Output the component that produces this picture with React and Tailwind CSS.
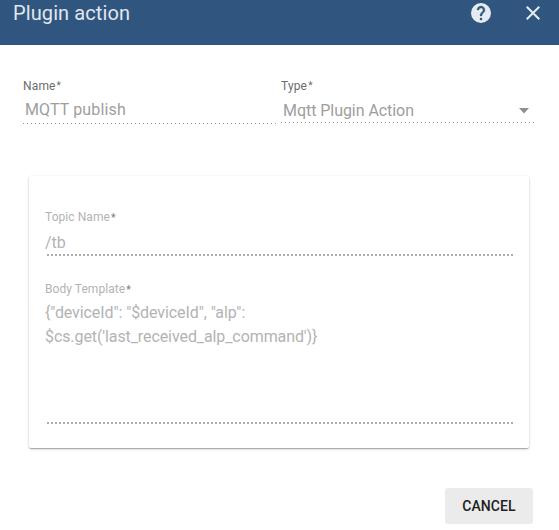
import React from 'react';

function Header() {
  return (
    <header className="flex h-[45px] items-start bg-[#305680] pl-[13px] pr-[14px] text-[#e0e7ee]">
      <h2 className="flex-1 text-[20px] leading-[26px] tracking-[0.1px]">Plugin action</h2>
      <button aria-label="Help" className="mr-[28px] mt-px block h-6 w-6">
        <svg viewBox="0 0 24 24" className="block h-6 w-6">
          <circle cx="12" cy="12" r="10" className="fill-[#e6ebf0]" />
          <path
            className="fill-[#305680] stroke-[#305680] [stroke-width:0.3]"
            d="M11 17h2v2h-2zM15.07 11.25l-.9.92C13.45 12.9 13 13.5 13 15h-2v-.5c0-1.1.45-2.1 1.17-2.83l1.24-1.26c.37-.36.59-.86.59-1.41 0-1.1-.9-2-2-2s-2 .9-2 2H8c0-2.21 1.79-4 4-4s4 1.79 4 4c0 .88-.36 1.68-.93 2.25z"
          />
        </svg>
      </button>
      <button aria-label="Close" className="mt-px block h-6 w-6">
        <svg viewBox="0 0 24 24" className="block h-6 w-6 fill-[#e6ebf0]">
          <path d="M19 6.41L17.59 5 12 10.59 6.41 5 5 6.41 10.59 12 5 17.59 6.41 19 12 13.41 17.59 19 19 17.59 13.41 12z" />
        </svg>
      </button>
    </header>
  );
}

function CardField({ label, lines, bodyClass }) {
  return (
    <div>
      <div className="flex h-[14px] text-[12px] leading-[14px] tracking-[0.06px] text-[#b3b3b3]">
        <span>{label}</span>
        <span className="ml-px text-[10px] font-bold leading-[15px] text-[#858585]">*</span>
      </div>
      <div className={bodyClass}>
        {lines.map((line) => <div key={line}>{line}</div>)}
      </div>
      <div className="ml-[2px] h-[2px] w-[466px] bg-[repeating-linear-gradient(to_right,#acacac_0px,#acacac_2px,transparent_2px,transparent_4px)]" />
    </div>
  );
}

function FieldLabel({ children }) {
  return (
    <div className="flex h-[14px] text-[12px] leading-[14px] tracking-[0.15px] text-[#6c6c6c]">
      <span>{children}</span>
      <span className="ml-px text-[10px] leading-[14px]">*</span>
    </div>
  );
}

export default function App() {
  return (
    <div className="h-[530px] w-[559px] overflow-hidden bg-white font-['Roboto',sans-serif] opacity-[0.999]">
      <Header />
      <main>
        <div className="flex items-start pl-[23px] pt-[34px]">
          <div className="w-[258px]">
            <FieldLabel>Name</FieldLabel>
            <div className="h-[30px] pl-[2px] pt-[5px] text-[16px] leading-[24px] tracking-[0.14px] text-[#9e9e9e]">MQTT publish</div>
            <div className="h-px w-[254px] bg-[repeating-linear-gradient(to_right,#959595_0px,#959595_1px,transparent_1px,transparent_4px)]" />
          </div>
          <div className="w-[254px]">
            <FieldLabel>Type</FieldLabel>
            <div className="flex h-[29px] items-start justify-between pl-[2px] pr-[6px] pt-[6px] text-[16px] leading-[24px] text-[#9e9e9e]">
              <span className="tracking-[-0.05px]">Mqtt Plugin Action</span>
              <svg viewBox="0 0 10 6" className="mt-[9px] h-[6px] w-[10px] fill-[#8f8f8f]"><path d="M0 0h10L5 5.5z" /></svg>
            </div>
            <div className="h-px bg-[repeating-linear-gradient(to_right,#959595_0px,#959595_1px,transparent_1px,transparent_4px)]" />
          </div>
        </div>
        <section className="ml-[29px] mt-[52px] h-[272px] w-[500px] rounded-[2px] bg-white px-4 pt-[34px] shadow-[0_1px_3px_0_rgba(0,0,0,0.2),0_1px_1px_0_rgba(0,0,0,0.14),0_2px_1px_-1px_rgba(0,0,0,0.12)]">
          <CardField label="Topic Name" lines={['/tb']} bodyClass="h-[30px] pt-[7px] text-[16px] leading-[24px] text-[#b3b3b3]" />
          <div className="mt-[26px]">
            <CardField
              label="Body Template"
              lines={['{"deviceId": "$deviceId", "alp":', "$cs.get('last_received_alp_command')}"]}
              bodyClass="h-[126px] pt-[5px] text-[16px] leading-[24px] tracking-[-0.09px] text-[#b3b3b3]"
            />
          </div>
        </section>
        <footer className="mt-10 flex justify-end pr-[26px]">
          <button className="h-9 w-[88px] rounded-[3px] bg-[#ebebeb] text-[14px] font-medium leading-9 tracking-[0.1px] text-[#212121]">CANCEL</button>
        </footer>
      </main>
    </div>
  );
}
